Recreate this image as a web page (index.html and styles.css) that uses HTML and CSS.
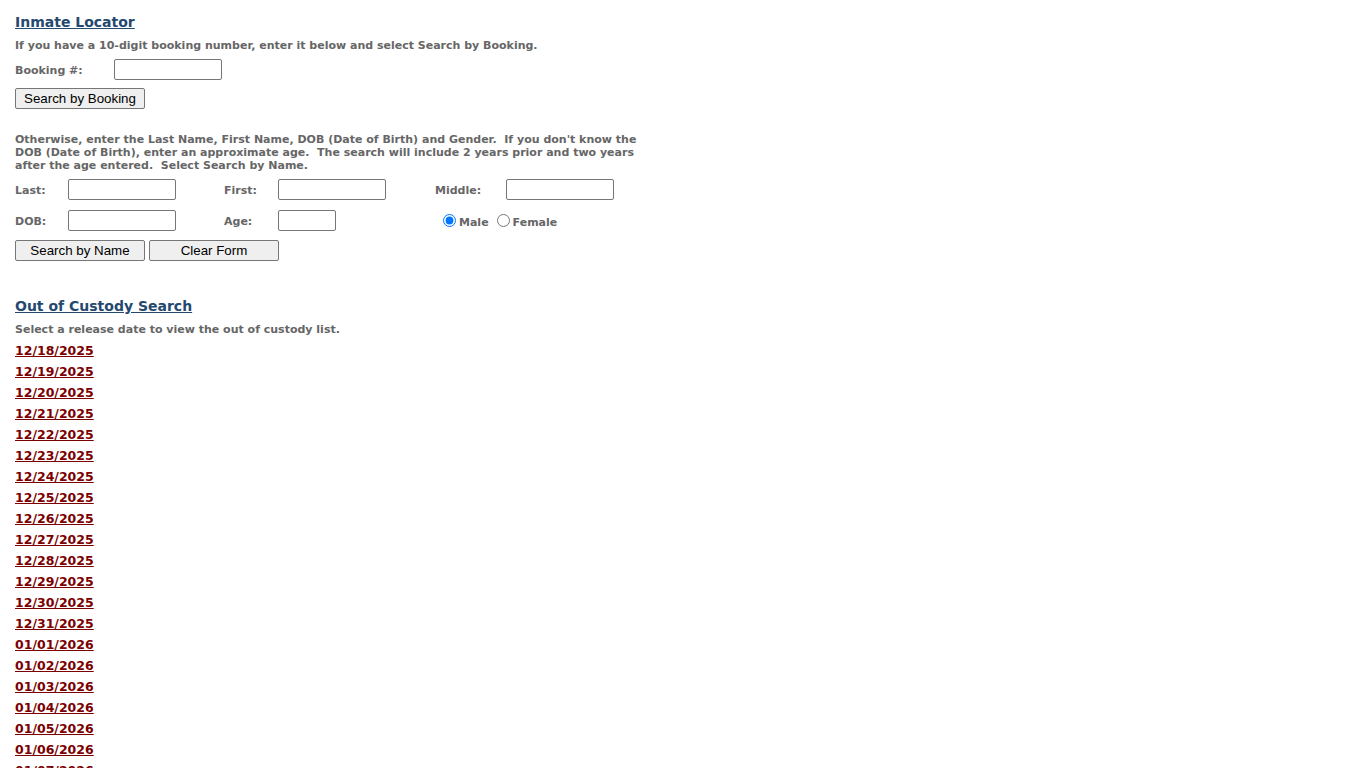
FILE: index.html
```html
<!DOCTYPE html>
<html lang="en">
<head>
  <meta charset="UTF-8">
  <meta name="viewport" content="width=device-width, initial-scale=1.0">
  <title>Inmate Locator</title>
  <link rel="stylesheet" href="styles.css">
</head>
<body>
  <div class="page">
    <h2><a href="#">Inmate Locator</a></h2>
    <p class="note">If you have a 10-digit booking number, enter it below and select Search by Booking.</p>

    <div class="booking-row">
      <label class="lbl lbl-booking">Booking #:</label>
      <input type="text" class="txt">
    </div>
    <div class="btn-row">
      <button type="button" class="btn">Search by Booking</button>
    </div>

    <p class="note intro">Otherwise, enter the Last Name, First Name, DOB (Date of Birth) and Gender.&nbsp; If you don't know the DOB (Date of Birth), enter an approximate age.&nbsp; The search will include 2 years prior and two years after the age entered.&nbsp; Select Search by Name.</p>

    <div class="name-form">
      <label class="lbl">Last:</label>
      <input type="text" class="txt">
      <label class="lbl">First:</label>
      <input type="text" class="txt">
      <label class="lbl">Middle:</label>
      <input type="text" class="txt">

      <label class="lbl">DOB:</label>
      <input type="text" class="txt">
      <label class="lbl">Age:</label>
      <input type="text" class="txt txt-age">
      <div class="gender">
        <label class="radio"><input type="radio" name="g" checked> <span>Male</span></label>
        <label class="radio"><input type="radio" name="g"> <span>Female</span></label>
      </div>
    </div>
    <div class="btn-row btn-row-name">
      <button type="button" class="btn">Search by Name</button>
      <button type="button" class="btn">Clear Form</button>
    </div>

    <h2 class="ooc"><a href="#">Out of Custody Search</a></h2>
    <p class="note">Select a release date to view the out of custody list.</p>
    <ul class="dates">
      <li><a href="#">12/18/2025</a></li>
      <li><a href="#">12/19/2025</a></li>
      <li><a href="#">12/20/2025</a></li>
      <li><a href="#">12/21/2025</a></li>
      <li><a href="#">12/22/2025</a></li>
      <li><a href="#">12/23/2025</a></li>
      <li><a href="#">12/24/2025</a></li>
      <li><a href="#">12/25/2025</a></li>
      <li><a href="#">12/26/2025</a></li>
      <li><a href="#">12/27/2025</a></li>
      <li><a href="#">12/28/2025</a></li>
      <li><a href="#">12/29/2025</a></li>
      <li><a href="#">12/30/2025</a></li>
      <li><a href="#">12/31/2025</a></li>
      <li><a href="#">01/01/2026</a></li>
      <li><a href="#">01/02/2026</a></li>
      <li><a href="#">01/03/2026</a></li>
      <li><a href="#">01/04/2026</a></li>
      <li><a href="#">01/05/2026</a></li>
      <li><a href="#">01/06/2026</a></li>
      <li><a href="#">01/07/2026</a></li>
      <li><a href="#">01/08/2026</a></li>
      <li><a href="#">01/09/2026</a></li>
    </ul>
  </div>
</body>
</html>
```

FILE: styles.css
```css
body {
  margin: 0;
  background: #fff;
  font-family: "DejaVu Sans", Verdana, sans-serif;
  font-size: 11px;
  font-weight: bold;
  color: #666;
}
.page {
  padding: 12px 15px 0 15px;
  width: 630px;
}
h2 {
  margin: 0;
  font-size: 14px;
  line-height: 20px;
}
h2 a {
  color: #24486e;
  text-decoration: underline;
}
.note {
  margin: 7px 0 0 0;
  line-height: 13px;
  font-size: 11px;
}
.lbl {
  font-size: 11px;
  padding-top: 2px;
}
.txt {
  box-sizing: border-box;
  width: 108px;
  height: 21px;
  margin: 0;
  border: 1px solid #767676;
  border-radius: 2px;
  padding: 1px 2px;
}
.txt-age {
  width: 58px;
}
.booking-row {
  display: grid;
  grid-template-columns: 99px 108px;
  align-items: center;
  margin-top: 7px;
}
.btn-row {
  display: flex;
  gap: 4px;
  margin-top: 8px;
}
.btn {
  box-sizing: border-box;
  width: 130px;
  height: 21px;
  margin: 0;
  padding: 0;
  background: #efefef;
  border: 1px solid #767676;
  border-radius: 2px;
  font-family: "Liberation Sans", Arial, sans-serif;
  font-size: 13.33px;
  color: #000;
}
.intro {
  margin-top: 24px;
}
.name-form {
  display: grid;
  grid-template-columns: 53px 156px 54px 157px 71px 108px;
  grid-auto-rows: 21px;
  row-gap: 10px;
  align-items: center;
  margin-top: 7px;
}
.name-form .txt-age {
  justify-self: start;
}
.gender {
  grid-column: 5 / span 2;
  display: flex;
  align-items: center;
  margin-left: 8px;
}
.radio {
  display: flex;
  align-items: center;
  font-size: 11px;
  margin-right: 8px;
}
.radio span {
  padding-top: 3px;
}
.radio input {
  margin: 0 3px 0 0;
  width: 13px;
  height: 13px;
}
.btn-row-name {
  margin-top: 9px;
}
.ooc {
  margin-top: 35px;
}
.dates {
  list-style: none;
  margin: 4px 0 0 0;
  padding: 0;
}
.dates li {
  height: 21px;
  line-height: 21px;
}
.dates a {
  color: #7b0000;
  font-size: 12.5px;
  line-height: 21px;
  text-decoration: underline;
}
```
